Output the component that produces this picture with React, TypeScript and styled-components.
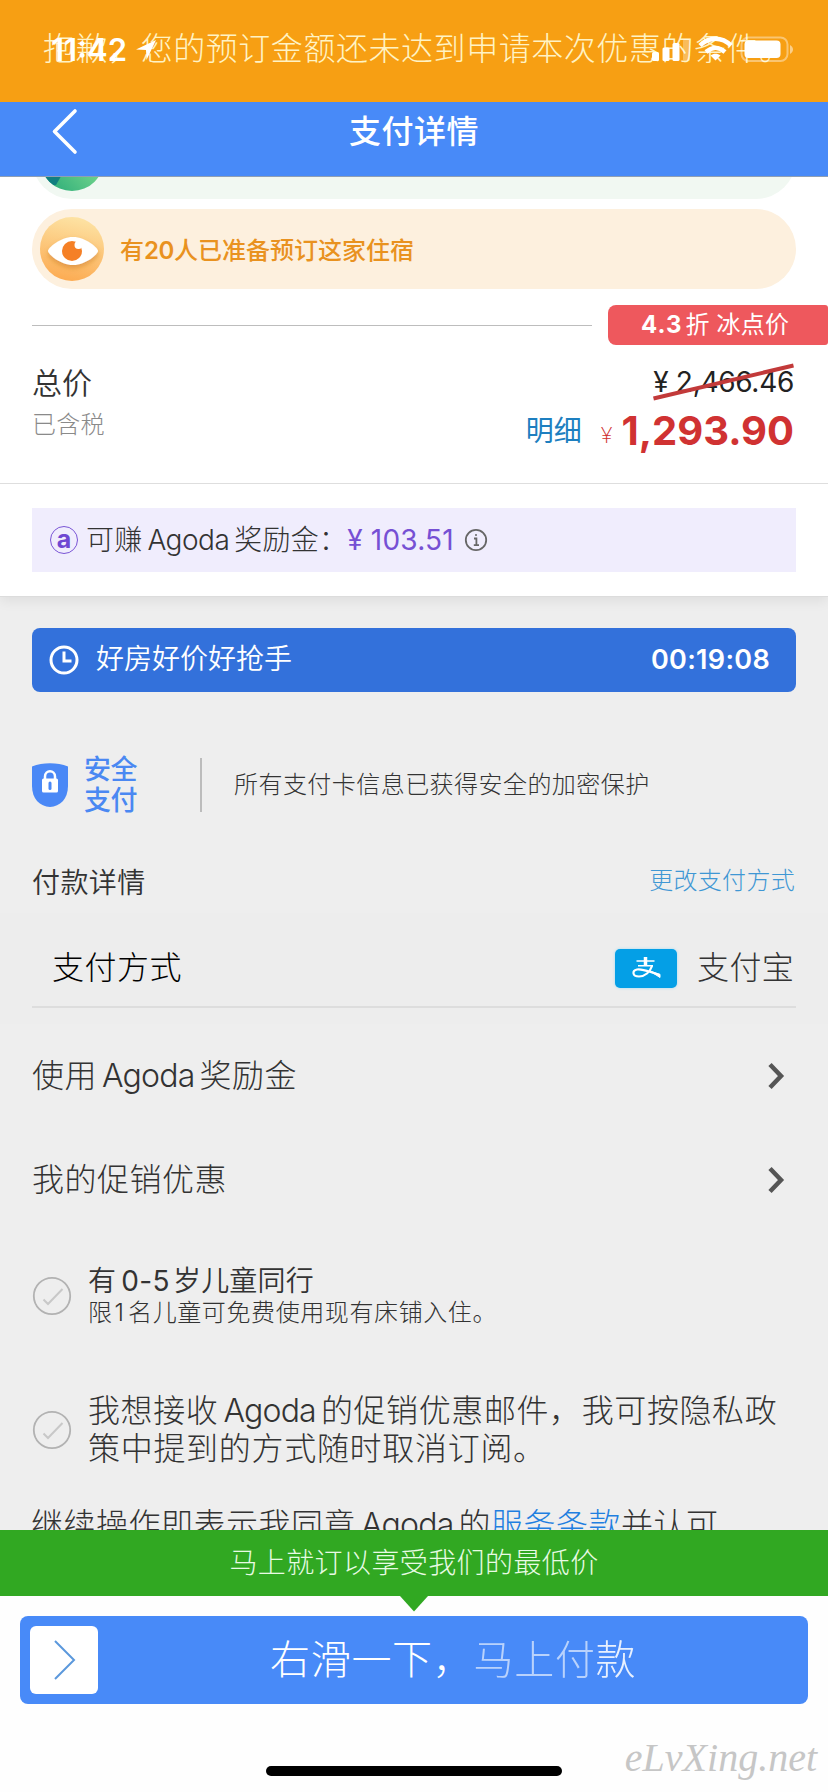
import React from 'react';
import styled, { createGlobalStyle } from 'styled-components';

const GlobalStyle = createGlobalStyle`
  * { box-sizing: border-box; }
  body {
    margin: 0;
    background: #fff;
    color: #333;
    font-family: Inter, 'Noto Sans CJK SC', sans-serif;
  }
`;

const Screen = styled.div`
  display: flex;
  flex-direction: column;
  width: 828px;
  height: 1792px;
  overflow: hidden;
  background: #fefefe;
`;

/* ---------- text ---------- */

const Txt = styled.span<{ $size?: number; $weight?: number; $gap?: number; $color?: string }>`
  display: inline-block;
  white-space: nowrap;
  line-height: 1;
  font-size: ${(p) => p.$size ?? 32}px;
  font-weight: ${(p) => p.$weight ?? 300};
  letter-spacing: ${(p) => p.$gap ?? 0.5}px;
  color: ${(p) => p.$color ?? 'inherit'};
`;

const Latin = styled.span<{ $before?: number; $after?: number; $gap?: number; $weight?: number }>`
  margin: 0 ${(p) => p.$after ?? 0}px 0 ${(p) => p.$before ?? 0}px;
  letter-spacing: ${(p) => p.$gap ?? 0}px;
  font-weight: ${(p) => p.$weight ?? 'inherit'};
`;

/* ---------- top ---------- */

const Toast = styled.div`
  position: relative;
  display: flex;
  align-items: center;
  height: 102px;
  padding: 0 0 4px 43px;
  background: #f79f13;
  color: #fff3c4;
`;

const StatusBar = styled.div`
  position: absolute;
  inset: 35px 34px auto 51px;
  display: flex;
  align-items: center;
  height: 29px;
  color: #fff;
`;

const Clock = styled.span`
  font-size: 31px;
  font-weight: 600;
  letter-spacing: 0;
  margin-right: 8px;
`;

const StatusIcons = styled.svg`
  margin-left: auto;
`;

const Header = styled.header`
  display: grid;
  grid-template-columns: 104px 1fr 104px;
  align-items: center;
  justify-items: center;
  height: 75px;
  padding-bottom: 14px;
  background: #488af8;
  border-bottom: 1px solid #8f9fb4;
  color: #fff;
`;

const BackIcon = styled.svg`
  margin: 0 0 2px 24px;
`;

/* ---------- content ---------- */

const Content = styled.main`
  flex: 1;
  min-height: 0;
  overflow: hidden;
  background: #eee;
`;

const Summary = styled.section`
  position: relative;
  background: #fff;
  border-bottom: 1px solid #dcdcdc;
  box-shadow: 0 4px 12px rgba(0, 0, 0, 0.07);
  height: 420px;
`;

const Pill = styled.div<{ $bg: string; $top: number }>`
  display: flex;
  align-items: center;
  height: 80px;
  margin: ${(p) => p.$top}px 32px 0;
  padding-left: 8px;
  gap: 16px;
  border-radius: 40px;
  background: ${(p) => p.$bg};
`;

const PillList = styled.div`
  overflow: hidden;
`;

const PillText = styled(Txt)`
  margin-top: 4px;
`;

const DiscountRow = styled.div`
  display: flex;
  align-items: center;
  gap: 16px;
  height: 40px;
  margin: 16px 0 0 32px;
`;

const Rule = styled.div`
  flex: 1;
  height: 1px;
  background: #bdbdbd;
`;

const Discount = styled.div`
  display: flex;
  align-items: center;
  width: 220px;
  height: 40px;
  padding-left: 33px;
  border-radius: 8px 3px 3px 8px;
  background: #ee585d;
  color: #fff;
`;

const Prices = styled.div`
  display: flex;
  justify-content: space-between;
  height: 139px;
  padding: 17px 34px 0 32px;
  border-bottom: 1px solid #dedede;
`;

const PriceColumn = styled.div<{ $rows: string; $end?: boolean }>`
  display: grid;
  grid-template-rows: ${(p) => p.$rows};
  align-items: center;
  align-content: start;
  justify-items: ${(p) => (p.$end ? 'end' : 'start')};
`;

const OldPrice = styled.div`
  position: relative;
  display: flex;
`;

const Strike = styled.svg`
  position: absolute;
  right: 0;
  top: 50%;
  margin-top: -20px;
`;

const NowPrice = styled.div`
  display: flex;
  align-items: center;
`;

const SmallYen = styled(Txt)`
  margin: 8px 9px 0 19px;
`;

const Reward = styled.div`
  display: flex;
  align-items: center;
  height: 64px;
  margin: 24px 32px 0;
  padding-left: 18px;
  background: #f0edfd;
`;

const CoinBadge = styled.span`
  display: flex;
  align-items: center;
  justify-content: center;
  width: 28px;
  height: 28px;
  margin-right: 8px;
  padding-bottom: 3px;
  border: 1.5px solid #7a55d6;
  border-radius: 50%;
  color: #6f48d2;
  font-size: 25px;
  font-weight: 700;
`;

const InfoIcon = styled.svg`
  margin-left: 10px;
`;

const Payment = styled.section`
  padding-top: 31px;
`;

const Countdown = styled.div`
  display: flex;
  align-items: center;
  height: 64px;
  margin: 0 32px;
  padding: 0 26px 2px 17px;
  border-radius: 8px;
  background: #3371db;
  color: #fff;

  svg { margin: 2px 17px 0 0; }
  > :last-child { margin-left: auto; }
`;

const Secure = styled.div`
  display: flex;
  align-items: center;
  height: 62px;
  margin: 62px 32px 0;
`;

const SecureLabel = styled.div`
  display: flex;
  flex-direction: column;
  gap: 4px;
  width: 116px;
  margin-left: 16px;
  color: #4a88f2;
`;

const SecureNote = styled.div`
  display: flex;
  align-items: center;
  height: 54px;
  padding-left: 32px;
  border-left: 2px solid #bcbcbc;
`;

const TitleRow = styled.div`
  display: flex;
  align-items: center;
  justify-content: space-between;
  height: 60px;
  margin: 37px 33px 0 32px;
`;

const ChangeLink = styled(Txt)`
  margin-bottom: 4px;
`;

const MethodBand = styled.div`
  padding: 17px 32px 16px;
  background: #ededed;
`;

const Method = styled.div`
  display: flex;
  align-items: center;
  height: 78px;
  padding: 0 2px 0 20px;
  border-bottom: 2px solid #ddd;

  > :first-child { margin-right: auto; }
`;

const Alipay = styled.span`
  display: flex;
  align-items: center;
  justify-content: center;
  width: 62px;
  height: 39px;
  margin-right: 20px;
  border-radius: 5px;
  background: #049fe6;
  box-shadow: 0 0 3px #9fdcf6;
`;

const LinkRow = styled.div`
  display: flex;
  align-items: center;
  justify-content: space-between;
  height: 104px;
  padding: 0 43px 0 32px;
`;

const CheckRow = styled.div<{ $top: number }>`
  display: flex;
  align-items: center;
  gap: 16px;
  margin: ${(p) => p.$top}px 32px 0;
`;

const Lines = styled.div`
  display: flex;
  flex-direction: column;
  align-items: flex-start;
`;

const Line = styled.div<{ $h: number }>`
  display: flex;
  align-items: center;
  height: ${(p) => p.$h}px;
`;

const Terms = styled.div`
  display: flex;
  align-items: center;
  height: 40px;
  margin: 37px 0 0 31px;

  a { color: #1f7fe0; }
`;

/* ---------- bottom ---------- */

const BestPrice = styled.div`
  position: relative;
  display: flex;
  align-items: center;
  justify-content: center;
  height: 66px;
  background: #31a822;
  color: #e8fbe4;
`;

const Pointer = styled.svg`
  position: absolute;
  left: 400px;
  top: 66px;
`;

const Footer = styled.footer`
  position: relative;
  height: 196px;
  padding: 20px 20px 0;
`;

const Slider = styled.div`
  display: flex;
  align-items: center;
  height: 88px;
  padding-left: 10px;
  border-radius: 8px;
  background: #488af8;
  color: #fff;
`;

const Thumb = styled.div`
  display: flex;
  align-items: center;
  justify-content: center;
  width: 68px;
  height: 68px;
  margin-right: 172px;
  border-radius: 6px;
  background: #fff;
`;

const Shimmer = styled.span<{ $level: number }>`
  opacity: ${(p) => p.$level};
`;

const HomeBar = styled.div`
  width: 296px;
  height: 10px;
  margin: 62px auto 0;
  border-radius: 5px;
  background: #000;
`;

const Watermark = styled.div`
  position: absolute;
  right: 11px;
  bottom: 12px;
  color: #c6c6c6;
  font: italic 40px/44px 'Liberation Serif', cursive;
`;

/* ---------- drawings ---------- */

const Chevron = () => (
  <svg width="18" height="28" viewBox="0 0 18 28" fill="none" stroke="#555" strokeWidth="4.500">
    <path d="M3 2.500 L14 14 L3 25.500" />
  </svg>
);

const Check = () => (
  <svg width="40" height="40" viewBox="0 0 40 40" fill="none">
    <circle cx="20" cy="20" r="18.2" stroke="#b2b2b2" strokeWidth="1.8" />
    <path d="M11.5 23.5 L16 28 L30.5 13" stroke="#c8c8c8" strokeWidth="2" />
  </svg>
);

const EyeIcon = () => (
  <svg width="64" height="64" viewBox="0 0 64 64">
    <defs>
      <linearGradient id="amber" x1="0.6" y1="0" x2="0.4" y2="1">
        <stop offset="0" stopColor="#fde3a4" />
        <stop offset="1" stopColor="#fcab52" />
      </linearGradient>
      <filter id="soft" x="-20%" y="-30%" width="140%" height="180%">
        <feDropShadow dx="0" dy="3" stdDeviation="2.5" floodColor="#c07018" floodOpacity="0.45" />
      </filter>
    </defs>
    <circle cx="32" cy="32" r="32" fill="url(#amber)" />
    <path
      d="M8 34 C8 31 20 20 33 20 C46 20 58 31 58 34 C58 37 46 48 33 48 C20 48 8 37 8 34 Z"
      fill="#fff"
      filter="url(#soft)"
    />
    <circle cx="32" cy="34" r="10" fill="#f58026" />
    <circle cx="38.5" cy="28" r="4" fill="#fff" />
  </svg>
);

const GreenIcon = () => (
  <svg width="64" height="64" viewBox="0 0 64 64">
    <defs>
      <linearGradient id="leaf" x1="0.2" y1="1" x2="0.8" y2="0.4">
        <stop offset="0" stopColor="#2fae7a" />
        <stop offset="1" stopColor="#7edb8f" />
      </linearGradient>
      <clipPath id="disc"><circle cx="32" cy="32" r="32" /></clipPath>
    </defs>
    <g clipPath="url(#disc)">
      <rect width="64" height="64" fill="url(#leaf)" />
      <path d="M0 44 H24 L16 58 H0 Z" fill="#127f80" />
    </g>
  </svg>
);

export default function App() {
  return (
    <Screen>
      <GlobalStyle />
      <Toast>
        <Txt $size={32} $gap={0.55}>抱歉，您的预订金额还未达到申请本次优惠的条件。</Txt>
        <StatusBar>
          <Clock>11:42</Clock>
          <svg width="22" height="22" viewBox="0 0 22 22" fill="#fff">
            <path d="M21 1 L1 10.5 L11 11 L11.5 21 Z" />
          </svg>
          <StatusIcons width="144" height="29" viewBox="0 0 144 29" fill="#fff">
            <rect x="2" y="17" width="7" height="9" rx="1.5" />
            <rect x="12.500" y="12.500" width="7" height="13.500" rx="1.500" />
            <rect x="22.500" y="8" width="7" height="18" rx="1.500" />
            <rect x="33" y="4" width="7" height="22" rx="1.500" opacity="0.3" />
            <g fill="none" stroke="#fff" strokeWidth="4.500">
              <path d="M50 10.500 C59 1.500 72 1.500 81 10.500" />
              <path d="M56 17 C62 11.500 69 11.500 75 17" />
            </g>
            <path d="M65.500 25.500 L60.500 20.500 C63.500 18 67.500 18 70.500 20.500 Z" />
            <rect x="91.500" y="2.500" width="46" height="23.500" rx="7" fill="none" stroke="#fff" strokeWidth="2" opacity="0.4" />
            <rect x="94.500" y="5.500" width="36" height="17.500" rx="4" />
            <path d="M140 10 C144 12 144 17 140 19 Z" opacity="0.5" />
          </StatusIcons>
        </StatusBar>
      </Toast>
      <Header>
        <BackIcon width="28" height="48" viewBox="0 0 28 48" fill="none" stroke="#fff" strokeWidth="3.600" strokeLinecap="round" strokeLinejoin="round">
          <path d="M25 4 L4.500 24.500 L25 45" />
        </BackIcon>
        <Txt $weight={500} $gap={0.5}>支付详情</Txt>
      </Header>

      <Content>
        <Summary>
          <PillList>
            <Pill $bg="#f1f8f2" $top={-58}><GreenIcon /></Pill>
            <Pill $bg="#fdf0de" $top={10}>
              <EyeIcon />
              <PillText $size={24} $weight={500} $gap={0} $color="#e9921f">
                有<Latin $weight={600} $gap={-0.4}>20</Latin>人已准备预订这家住宿
              </PillText>
            </Pill>
          </PillList>
          <DiscountRow>
            <Rule />
            <Discount>
              <Txt $size={24} $weight={400} $gap={0.2}>
                <Latin $weight={700} $gap={1} $after={3}>4.3</Latin>折 冰点价
              </Txt>
            </Discount>
          </DiscountRow>
          <Prices>
            <PriceColumn $rows="42px 42px">
              <Txt $size={30} $weight={350} $gap={0}>总价</Txt>
              <Txt $size={24} $gap={0.2} $color="#8a8a8a">已含税</Txt>
            </PriceColumn>
            <PriceColumn $rows="40px 58px" $end>
              <OldPrice>
                <Txt $size={28} $weight={400} $gap={-0.3} $color="#222">¥ 2,466.46</Txt>
                <Strike width="141" height="40" viewBox="0 0 141 40" stroke="#c23a3a" strokeWidth="4">
                  <path d="M0.500 36.500 L140.500 3.500" />
                </Strike>
              </OldPrice>
              <NowPrice>
                <Txt $size={28} $weight={400} $gap={0} $color="#1d7fc0">明细</Txt>
                <SmallYen $size={22} $weight={200} $gap={0} $color="#d03030">¥</SmallYen>
                <Txt $size={40} $weight={700} $gap={0} $color="#d03232">1,293.90</Txt>
              </NowPrice>
            </PriceColumn>
          </Prices>
          <Reward>
            <CoinBadge>a</CoinBadge>
            <Txt $size={28} $gap={0.2}>
              可赚<Latin $before={5} $after={5} $gap={-0.5}>Agoda</Latin>奖励金：
            </Txt>
            <Txt $size={28} $weight={400} $gap={0.2} $color="#7650d4">¥ 103.51</Txt>
            <InfoIcon width="24" height="24" viewBox="0 0 24 24" fill="none" stroke="#666" strokeWidth="1.800">
              <circle cx="12" cy="12" r="10.200" />
              <path d="M10 10.500 H12.400 V17 M9.800 17.200 H15" />
              <circle cx="12" cy="7" r="1" fill="#666" stroke="none" />
            </InfoIcon>
          </Reward>
        </Summary>

        <Payment>
          <Countdown>
            <svg width="30" height="30" viewBox="0 0 30 30" fill="none" stroke="#fff" strokeWidth="3">
              <circle cx="15" cy="15" r="13" />
              <path d="M15 6.500 V16 H22.500" />
            </svg>
            <Txt $size={28} $weight={350} $gap={0}>好房好价好抢手</Txt>
            <Txt $size={27} $weight={600} $gap={0.3}>00:19:08</Txt>
          </Countdown>

          <Secure>
            <svg width="36" height="46" viewBox="0 0 36 46">
              <path d="M0 4.500 C11 0.200 25 0.200 36 4.500 V24 C36 37 28 44.500 18 45 C8 44.500 0 37 0 24 Z" fill="#4a88f6" />
              <path d="M13 17 V14.500 C13 7.500 23 7.500 23 14.500 V17" fill="none" stroke="#fff" strokeWidth="2.500" />
              <rect x="10" y="16.500" width="16" height="14" rx="1.500" fill="#fff" />
              <path d="M18 21 V26.500" stroke="#4a88f6" strokeWidth="3" strokeLinecap="round" />
            </svg>
            <SecureLabel>
              <Txt $size={27} $weight={500} $gap={-0.4}>安全</Txt>
              <Txt $size={27} $weight={500} $gap={-0.4}>支付</Txt>
            </SecureLabel>
            <SecureNote>
              <Txt $size={24} $gap={0.45}>所有支付卡信息已获得安全的加密保护</Txt>
            </SecureNote>
          </Secure>

          <TitleRow>
            <Txt $size={28} $weight={350} $gap={0.4}>付款详情</Txt>
            <ChangeLink $size={24} $weight={200} $gap={0.3} $color="#3f97d4">更改支付方式</ChangeLink>
          </TitleRow>

          <MethodBand>
            <Method>
              <Txt $gap={0.5} $color="#000">支付方式</Txt>
              <Alipay>
                <svg width="30" height="24" viewBox="0 0 30 24" fill="none" stroke="#fff">
                  <path d="M5.500 5 H23.500 M7 9.800 H22" strokeWidth="1.600" />
                  <path d="M14.500 1 V10" strokeWidth="3.500" />
                  <path d="M21 10 C19 16 14 20.500 8 20.500 C1 20.500 1 14.500 6 13.500 C12 12.500 18 16 29 19" strokeWidth="2.200" />
                  <path d="M18 14.500 L29 18.500 V21.500 Z" fill="#fff" strokeWidth="1" />
                </svg>
              </Alipay>
              <Txt $gap={0.3}>支付宝</Txt>
            </Method>
          </MethodBand>

          <LinkRow>
            <Txt $gap={0.5}>使用<Latin $before={5} $after={5} $gap={-0.8}>Agoda</Latin>奖励金</Txt>
            <Chevron />
          </LinkRow>
          <LinkRow>
            <Txt $gap={0.5}>我的促销优惠</Txt>
            <Chevron />
          </LinkRow>

          <CheckRow $top={32}>
            <Check />
            <Lines>
              <Line $h={34}>
                <Txt $size={28} $weight={350} $gap={0.2}>
                  有<Latin $before={5} $after={3} $gap={0.4} $weight={400}>0-5</Latin>岁儿童同行
                </Txt>
              </Line>
              <Line $h={30}>
                <Txt $size={24} $gap={0.6}>限<Latin $before={2} $after={4}>1</Latin>名儿童可免费使用现有床铺入住。</Txt>
              </Line>
            </Lines>
          </CheckRow>
          <CheckRow $top={64}>
            <Check />
            <Lines>
              <Line $h={38}>
                <Txt $gap={0.6}>我想接收<Latin $before={5} $after={5} $gap={-0.8}>Agoda</Latin>的促销优惠邮件，我可按隐私政</Txt>
              </Line>
              <Line $h={38}><Txt $gap={0.7}>策中提到的方式随时取消订阅。</Txt></Line>
            </Lines>
          </CheckRow>
          <Terms>
            <Txt $gap={0.5}>
              继续操作即表示我同意<Latin $before={5} $after={5} $gap={-0.8}>Agoda</Latin>的<a>服务条款</a>并认可
            </Txt>
          </Terms>
        </Payment>
      </Content>

      <BestPrice>
        <Txt $size={28} $gap={0.4}>马上就订以享受我们的最低价</Txt>
        <Pointer width="28" height="16" viewBox="0 0 28 16"><path d="M0 0 H28 L14 15.500 Z" fill="#31a822" /></Pointer>
      </BestPrice>
      <Footer>
        <Slider>
          <Thumb>
            <svg width="24" height="42" viewBox="0 0 24 42" fill="none" stroke="#5b98dc" strokeWidth="2">
              <path d="M3 2 L22 21 L3 40" />
            </svg>
          </Thumb>
          <Txt $size={40} $gap={0.7}>
            右滑一下，<Shimmer $level={0.62}>马上付</Shimmer><Shimmer $level={0.88}>款</Shimmer>
          </Txt>
        </Slider>
        <HomeBar />
        <Watermark>eLvXing.net</Watermark>
      </Footer>
    </Screen>
  );
}
